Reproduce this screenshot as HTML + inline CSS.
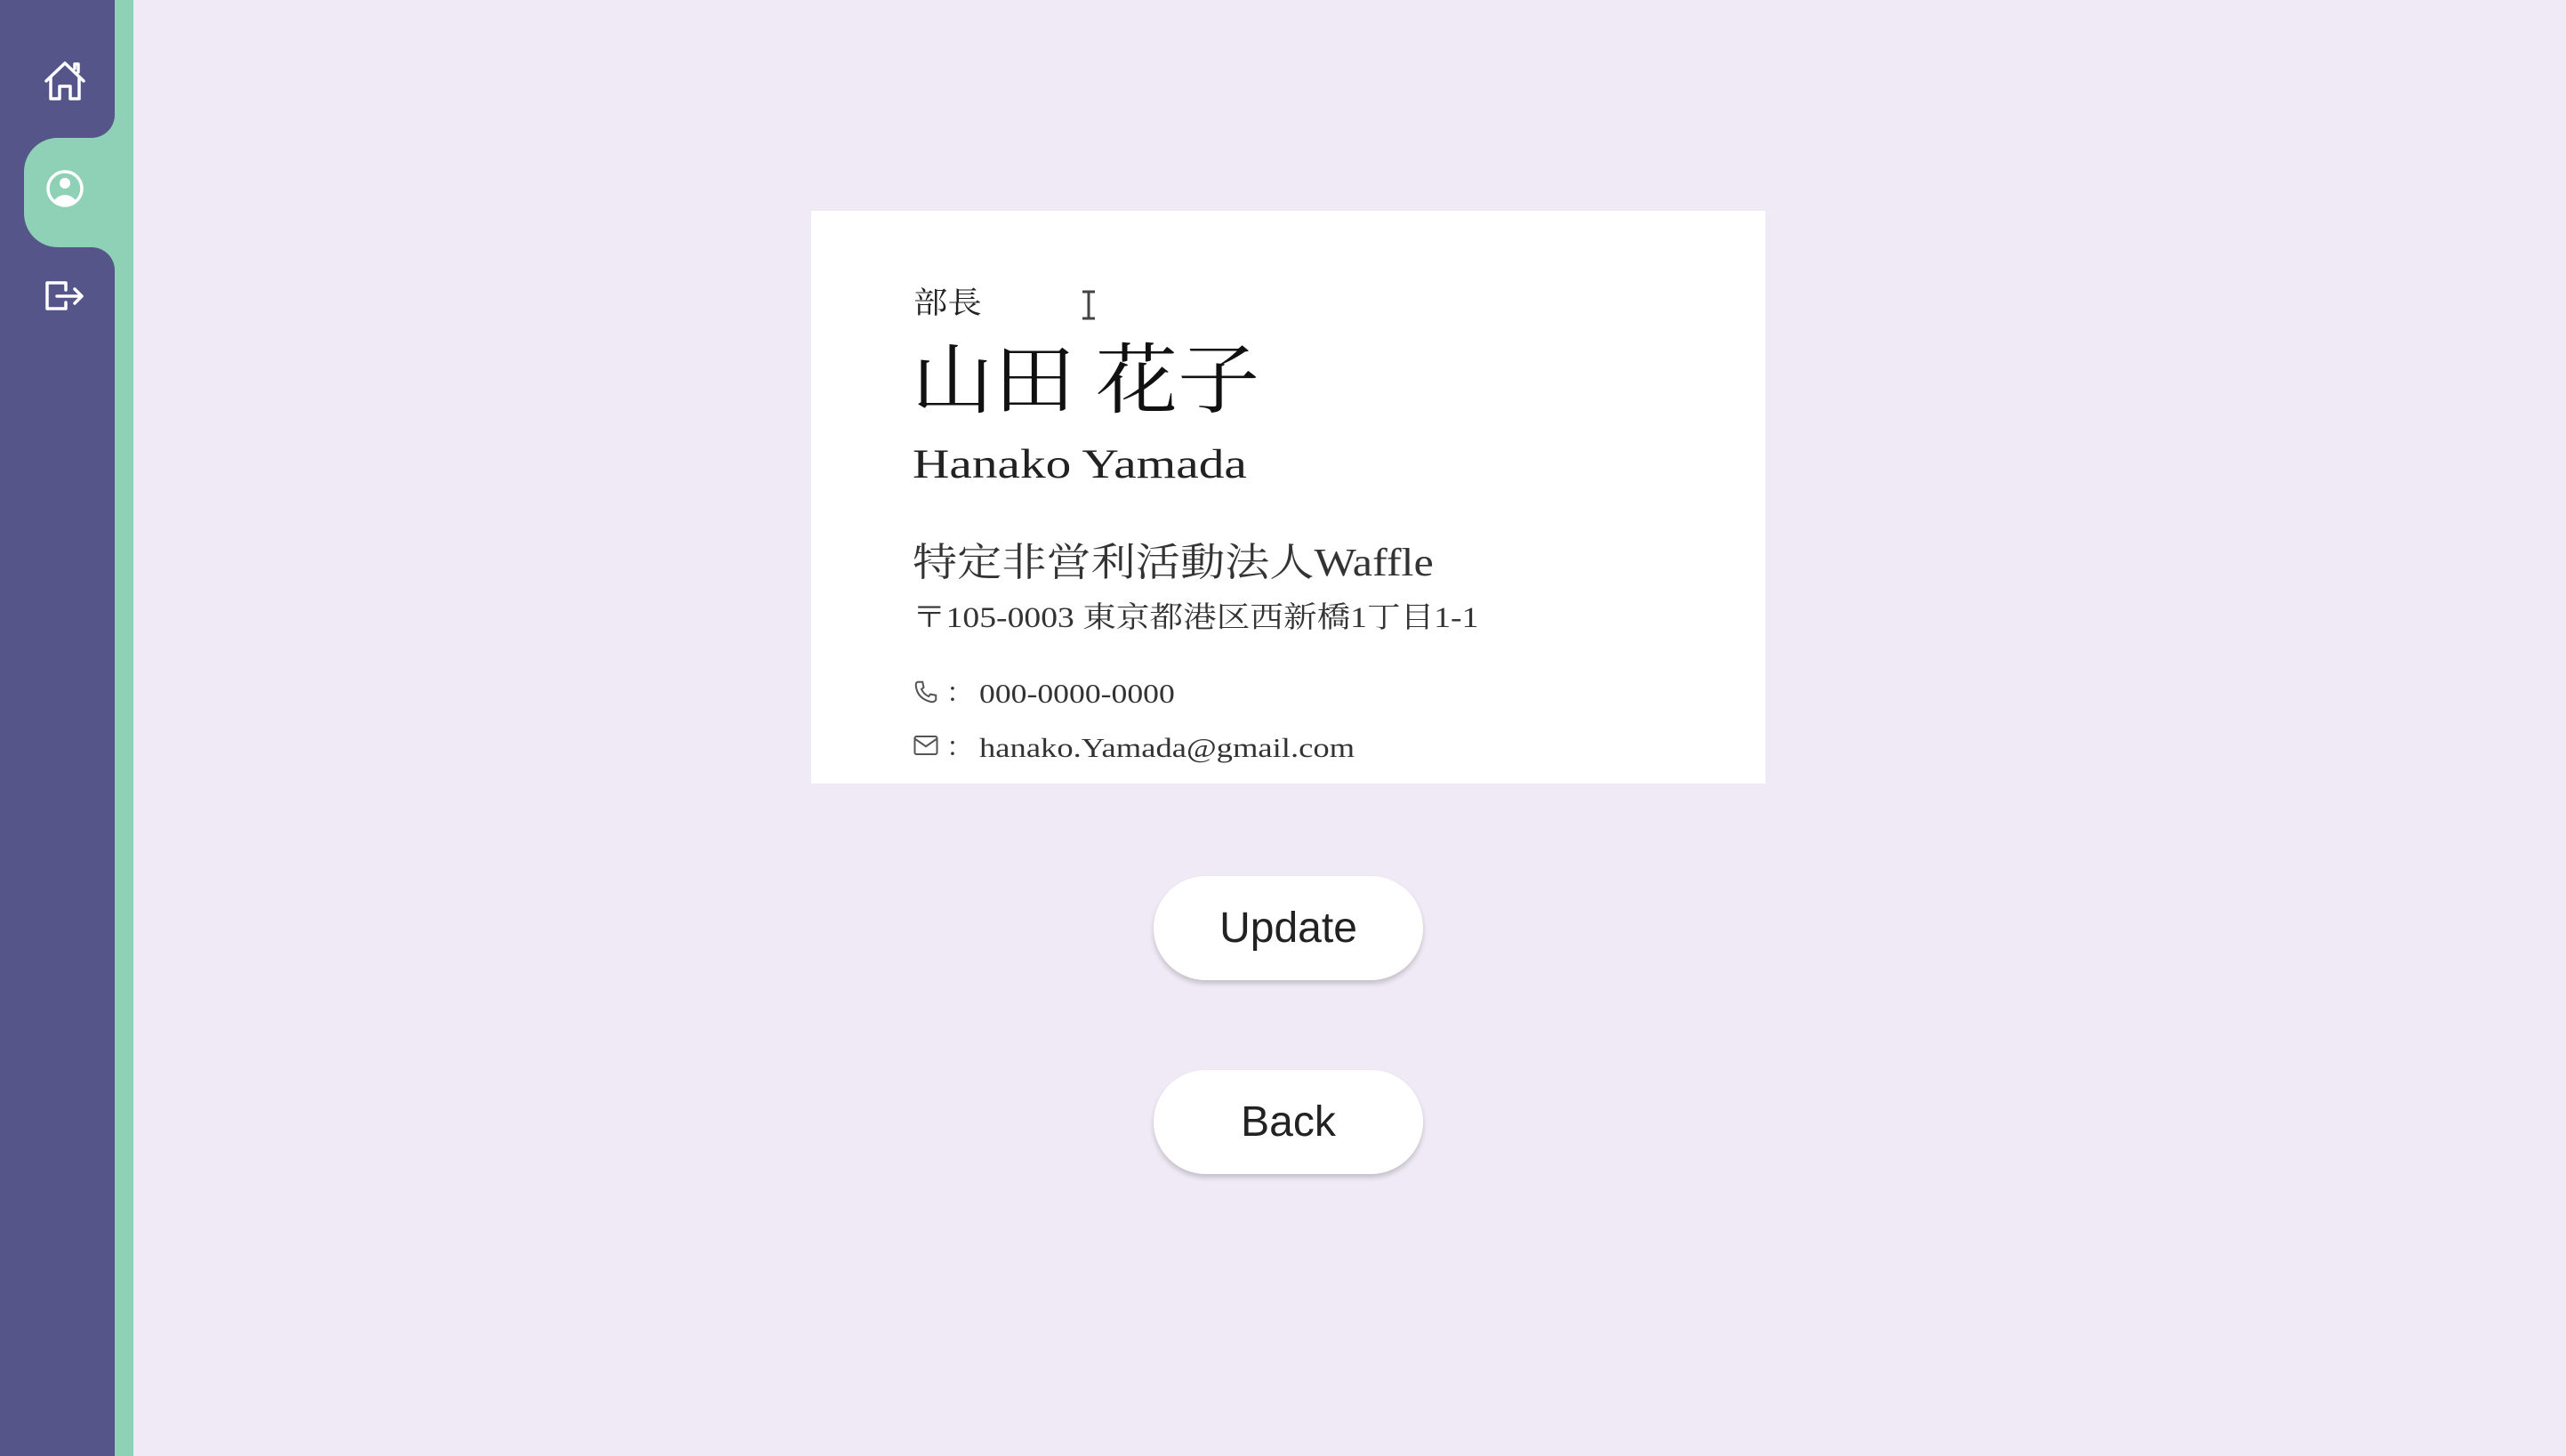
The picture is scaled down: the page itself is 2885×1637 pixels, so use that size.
<!DOCTYPE html>
<html><head><meta charset="utf-8"><style>
html,body{margin:0;padding:0;width:2885px;height:1637px;overflow:hidden;background:#f0eaf6;}
.sb{position:absolute;left:0;top:0;}
.card{position:absolute;left:912px;top:237px;width:1073px;height:644px;background:#fff;}
.t{position:absolute;white-space:nowrap;font-family:"Liberation Serif","Noto Serif CJK SC","Noto Sans CJK JP",serif;color:#222;line-height:1;transform-origin:0 0;}
.btn{position:absolute;left:1297px;width:303px;height:117px;border-radius:60px;background:#fff;box-shadow:0 4px 6px rgba(0,0,0,0.18);font-family:"Liberation Sans",sans-serif;font-size:48px;color:#222;display:flex;align-items:center;justify-content:center;}
</style></head><body>
<svg class="sb" width="150" height="1637" viewBox="0 0 150 1637">
<rect x="0" y="0" width="129" height="1637" fill="#56558a"/>
<rect x="129" y="0" width="21" height="1637" fill="#8fd1b7"/>
<rect x="100" y="125" width="50" height="185" fill="#8fd1b7"/>
<rect x="0" y="-40" width="129" height="195" rx="26" fill="#56558a"/>
<rect x="0" y="278" width="129" height="1400" rx="26" fill="#56558a"/>
<rect x="27" y="155" width="160" height="123" rx="38" fill="#8fd1b7"/>
<g fill="none" stroke="#fff" stroke-width="3.5" stroke-linejoin="round" stroke-linecap="round">
<path d="M52,91 L73,71 L94,91 M57,87 V111 H67 V97 H79 V111 H89 V87 M84,77 V72 H88 V81"/>
<circle cx="73" cy="212" r="19"/>
<path d="M53,347 V318 H74 V326 M74,340 V347 H53 M64,333 H92 M84,325 L92,333 L84,341"/>
</g>
<circle cx="73" cy="206" r="6" fill="#fff"/>
<path d="M60,226 Q73,212 86,226 Q73,234 60,226Z" fill="#fff"/>
</svg>
<div class="card"></div>
<div class="t" style="left:1027px;top:325px;font-size:34px;transform:scaleX(1.13);">部長</div>
<svg style="position:absolute;left:1212px;top:325px" width="24" height="36" viewBox="0 0 24 36" fill="none" stroke="#444" stroke-width="3"><path d="M5,3 H19 M12,3 V33 M5,33 H19"/></svg>
<div class="t" style="left:1025px;top:385px;font-size:86px;color:#111;transform:scaleX(1.07);">山田 花子</div>
<div class="t" style="left:1026px;top:499px;font-size:47px;transform:scaleX(1.22);">Hanako Yamada</div>
<div class="t" style="left:1026px;top:611px;font-size:44px;color:#333;transform:scaleX(1.14);">特定非営利活動法人Waffle</div>
<div class="t" style="left:1026px;top:679px;font-size:33px;color:#333;transform:scaleX(1.14);">〒105-0003 東京都港区西新橋1丁目1-1</div>
<svg style="position:absolute;left:1026px;top:763px" width="30" height="30" viewBox="0 0 24 24" fill="none" stroke="#555" stroke-width="1.6"><path d="M5,3 L9,3 L10,8 L8,9.5 Q10,14 14.5,16 L16,14 L21,15 L21,19 Q20,21 17,21 Q4,18 3,6 Q3,3 5,3Z"/></svg>
<div class="t" style="left:1064px;top:765px;font-size:30px;color:#333;">：</div>
<div class="t" style="left:1101px;top:764px;font-size:31px;color:#333;transform:scaleX(1.15);">000-0000-0000</div>
<svg style="position:absolute;left:1026px;top:825px" width="30" height="26" viewBox="0 0 24 20" fill="none" stroke="#555" stroke-width="1.6"><rect x="2" y="2" width="20" height="16" rx="1.5"/><path d="M2,4 L12,11 L22,4"/></svg>
<div class="t" style="left:1064px;top:826px;font-size:30px;color:#333;">：</div>
<div class="t" style="left:1101px;top:825px;font-size:31px;color:#333;transform:scaleX(1.18);">hanako.Yamada@gmail.com</div>
<div class="btn" style="top:985px;">Update</div>
<div class="btn" style="top:1203px;">Back</div>
</body></html>
